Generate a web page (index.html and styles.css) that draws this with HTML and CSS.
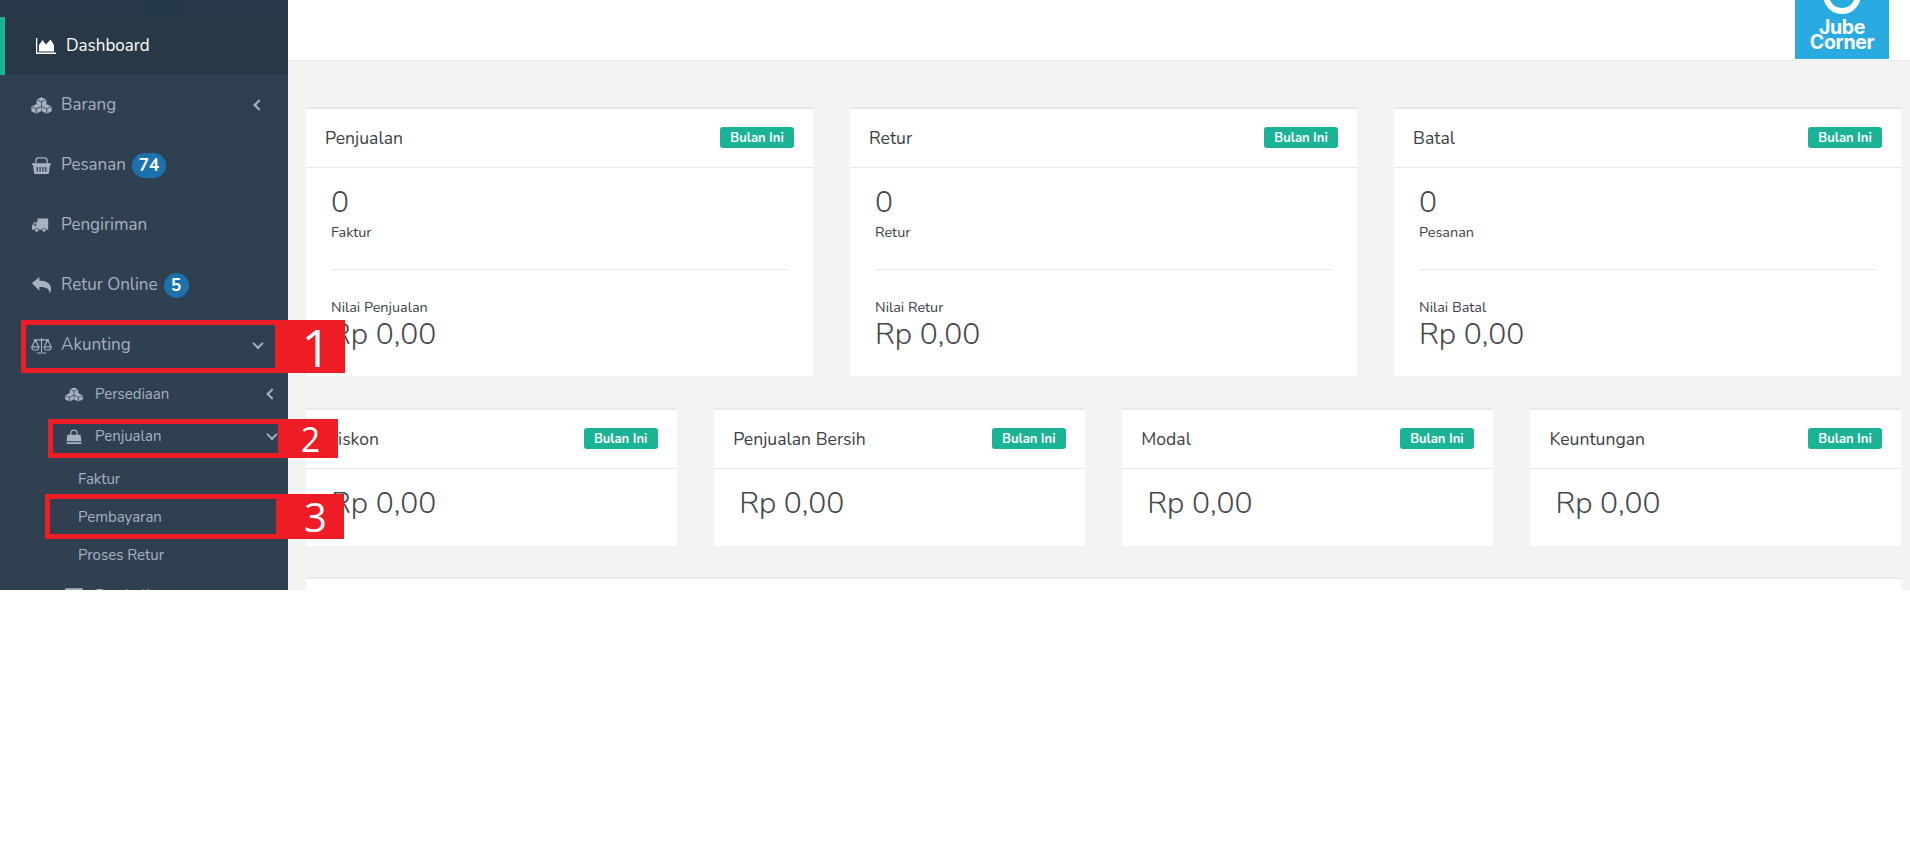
FILE: index.html
```html
<!DOCTYPE html>
<html lang="id">
<head>
<meta charset="utf-8">
<title>Dashboard</title>
<link rel="stylesheet" href="styles.css">
</head>
<body>
<div class="page">
  <aside class="sidebar">
    <div class="strip"></div>
    <nav class="nav">
      <a class="item active"><svg class="ico" viewBox="0 0 20 16"><path d="M0 0h1.300v14.600H20V16H0z"/><path d="M3 13.500V7L6.500 2 10 6.500l4.500-5L18 7v6.500z"/></svg><span>Dashboard</span></a>
      <a class="item"><svg class="ico" viewBox="0 0 22 18"><use href="#cubes"/></svg><span>Barang</span><i class="chev left"></i></a>
      <a class="item"><svg class="ico" viewBox="0 0 20 18"><use href="#basket"/></svg><span>Pesanan</span><b class="pill">74</b></a>
      <a class="item"><svg class="ico" viewBox="-1 -1 21 17"><g transform="scale(.9)"><path fill-rule="evenodd" d="M6 1.500A1 1 0 0 1 7 .5h10a1 1 0 0 1 1 1V13h-2.200a2.600 2.600 0 0 0-5 0H7.800a2.600 2.600 0 0 0-5 0H0V9l2.500-4.400H6zM2 8.500h2.700V6.200H3.300z"/><circle cx="5.300" cy="13.600" r="1.800"/><circle cx="13.300" cy="13.600" r="1.800"/></g></svg><span>Pengiriman</span></a>
      <a class="item"><svg class="ico" viewBox="0 0 18 16"><path d="M0 5.800 7 0v3.500c5 0 11 1.500 11 8 0 2-1 3.500-1.500 4.300.500-3.800-2-6.300-9.500-6.300v3.500z"/></svg><span>Retur Online</span><b class="pill round">5</b></a>
      <a class="item"><svg class="ico" viewBox="0 0 22 18"><g fill="none" stroke="currentColor" stroke-width="1.200"><path d="M11 1v15M6 17h10M3 3h16M4.500 3 1 10M4.500 3 8 10M17.500 3 14 10M17.500 3 21 10"/><path d="M.7 10.500h7.600a3.800 3.300 0 0 1-7.600 0zM13.700 10.500h7.600a3.800 3.300 0 0 1-7.600 0z"/></g></svg><span>Akunting</span><i class="chev down"></i></a>
      <div class="sub">
        <a class="subitem"><svg class="ico small" viewBox="0 0 22 18"><use href="#cubes"/></svg><span>Persediaan</span><i class="chev left"></i></a>
        <a class="subitem"><svg class="ico small" viewBox="0 0 16 16"><path d="M1 6h3V4.500a4 4 0 0 1 8 0V6h3l1 7H0zM5.300 6h5.400V4.500a2.700 2.700 0 0 0-5.400 0zM0 14h16v2H0z"/></svg><span>Penjualan</span><i class="chev down"></i></a>
        <a class="leaf">Faktur</a>
        <a class="leaf">Pembayaran</a>
        <a class="leaf">Proses Retur</a>
        <a class="subitem"><svg class="ico small" viewBox="0 0 20 16"><rect width="20" height="16" rx="1"/></svg><span>Pembelian</span></a>
      </div>
    </nav>
  </aside>
  <main class="main">
    <header class="topbar">
      <div class="logo">
        <span class="ring"></span>
        <span class="logotext">Jube<br>Corner</span>
      </div>
    </header>
    <section class="content">
      <div class="row three">
        <article class="card">
          <div class="head"><h5>Penjualan</h5><span class="tag">Bulan Ini</span></div>
          <div class="body"><p class="num">0</p><small>Faktur</small><hr><small>Nilai Penjualan</small><p class="num tight">Rp 0,00</p></div>
        </article>
        <article class="card">
          <div class="head"><h5>Retur</h5><span class="tag">Bulan Ini</span></div>
          <div class="body"><p class="num">0</p><small>Retur</small><hr><small>Nilai Retur</small><p class="num tight">Rp 0,00</p></div>
        </article>
        <article class="card">
          <div class="head"><h5>Batal</h5><span class="tag">Bulan Ini</span></div>
          <div class="body"><p class="num">0</p><small>Pesanan</small><hr><small>Nilai Batal</small><p class="num tight">Rp 0,00</p></div>
        </article>
      </div>
      <div class="row four">
        <article class="card">
          <div class="head"><h5>Diskon</h5><span class="tag">Bulan Ini</span></div>
          <div class="body short"><p class="num">Rp 0,00</p></div>
        </article>
        <article class="card">
          <div class="head"><h5>Penjualan Bersih</h5><span class="tag">Bulan Ini</span></div>
          <div class="body short"><p class="num">Rp 0,00</p></div>
        </article>
        <article class="card">
          <div class="head"><h5>Modal</h5><span class="tag">Bulan Ini</span></div>
          <div class="body short"><p class="num">Rp 0,00</p></div>
        </article>
        <article class="card">
          <div class="head"><h5>Keuntungan</h5><span class="tag">Bulan Ini</span></div>
          <div class="body short"><p class="num">Rp 0,00</p></div>
        </article>
      </div>
      <div class="card wide"></div>
    </section>
  </main>
  <div class="mark m1"><div class="frame"></div><div class="no">1</div></div>
  <div class="mark m2"><div class="frame"></div><div class="no">2</div></div>
  <div class="mark m3"><div class="frame"></div><div class="no">3</div></div>
</div>
<svg class="defs" width="0" height="0">
  <symbol id="cubes" viewBox="0 0 22 18">
    <path d="M11 .3l5.200 2.300v5.200L11 10.300 5.800 7.800V2.600zM5.500 7.600l5.200 2.400v5.200l-5.200 2.500L.3 15.200V10zM16.500 7.600l5.200 2.400v5.200l-5.200 2.500-5.200-2.500V10z"/>
    <path d="M5.800 2.600 11 5l5.200-2.400M11 5v5.300M.3 10l5.200 2.500 5.200-2.500M5.500 12.500v5M11.300 10l5.200 2.500 5.200-2.500M16.500 12.500v5" fill="none" stroke="#2f4050" stroke-width=".9"/>
  </symbol>
  <symbol id="basket" viewBox="0 0 20 18">
    <path fill-rule="evenodd" d="M0 6.500h20v2h-1l-1.200 8.700a1 1 0 0 1-1 .8H3.200a1 1 0 0 1-1-.8L1 8.500H0zM4.800 10.500v5h1.400v-5zM7.800 10.500v5h1.400v-5zM10.800 10.500v5h1.400v-5zM13.800 10.500v5h1.400v-5z"/>
    <path d="M4 6.500V4a3 3 0 0 1 3-3h6a3 3 0 0 1 3 3v2.500" fill="none" stroke="currentColor" stroke-width="1.300"/>
  </symbol>
</svg>
</body>
</html>
```
FILE: styles.css
```css
* { box-sizing: border-box; }
html, body { margin: 0; background: #fff; }
body { font-family: "Nunito", "Lato", "Noto Sans", sans-serif; color: #3b3f44; }
.defs { position: absolute; }
.page { position: relative; display: flex; height: 590px; overflow: hidden; background: #f3f3f4; }

.sidebar { flex: 0 0 288px; background: #2f4050; color: #a7b1c2; }
.strip { height: 17px; background: linear-gradient(90deg, #283a4a 0, #25374a 60%, #293b4b 68%, #293a4a 100%); }
.nav { display: flex; flex-direction: column; }
.item { display: flex; align-items: center; height: 60px; padding-left: 31px; font-size: 17px; position: relative; }
.item > span { margin-bottom: 2px; }
.item .ico { width: 21px; height: 17px; margin-right: 9px; }
.item.active { height: 58px; background: #293846; color: #fff; border-left: 5px solid #1ab394; }
.item.active .ico { width: 20px; height: 16px; margin-right: 10px; }
.ico { fill: currentColor; flex: none; display: block; }
.chev { position: absolute; width: 8px; height: 8px; border-left: 2.750px solid currentColor; border-bottom: 2.750px solid currentColor; }
.chev.left { right: 25px; transform: rotate(45deg); }
.chev.down { right: 26px; transform: rotate(-45deg) translate(1px, -1px); }
.pill { margin-left: 6px; height: 25px; min-width: 34px; border-radius: 13px; background: #1c72ad; color: #fff; font-size: 17px; font-weight: 700; display: flex; align-items: center; justify-content: center; }
.pill.round { min-width: 25px; }

.sub { display: flex; flex-direction: column; margin-top: -2px; }
.subitem { display: flex; align-items: center; height: 42px; padding-left: 65px; font-size: 15px; position: relative; }
.subitem > span { margin-bottom: 1px; }
.subitem .chev { right: 12px; }
.ico.small { width: 18px; height: 15px; margin-right: 12px; }
.leaf { display: flex; align-items: center; height: 38px; padding-left: 78px; font-size: 15px; }
.subitem + .leaf { margin-top: 3px; }

.main { flex: 1; min-width: 0; display: flex; flex-direction: column; }
.topbar { flex: 0 0 61px; background: #fff; border-bottom: 1px solid #e7eaec; padding-right: 21px; display: flex; justify-content: flex-end; }
.logo { position: relative; width: 94px; height: 59px; background: #29abe2; color: #fff; overflow: hidden; display: flex; align-items: flex-end; justify-content: center; }
.ring { position: absolute; left: 28px; top: -24px; width: 38px; height: 38px; border-radius: 50%; border: 6px solid #fff; }
.logotext { font-family: "Inter", sans-serif; font-weight: 700; font-size: 19.500px; line-height: 15px; text-align: center; margin-bottom: 9px; letter-spacing: -.3px; }

.content { flex: 1; padding: 46px 9px 0 18px; display: flex; flex-direction: column; gap: 32px; }
.row { display: grid; }
.three { grid-template-columns: 507px 507px 1fr; column-gap: 37px; }
.four { grid-template-columns: repeat(4, 1fr); column-gap: 37.500px; }
.card { background: #fff; border-top: 2px solid #e7eaec; }
.wide { flex: 1; margin-top: -1px; }
.head { display: flex; justify-content: space-between; align-items: center; height: 59px; padding: 0 19px 1px 19px; border-bottom: 1px solid #e7eaec; }
h5 { margin: 0; font-size: 17.600px; font-weight: 400; color: #3b3f44; }
.tag { width: 74px; height: 21px; border-radius: 3px; background: #1ab394; color: #fff; font-size: 13px; font-weight: 700; display: flex; align-items: center; justify-content: center; }
.body { padding: 16px 25px 0 25px; height: 208px; }
.body.short { height: 77px; padding-top: 16px; }
.num { margin: 0; font-size: 30px; font-weight: 300; line-height: 38px; color: #44484d; }
.tight { line-height: 36px; }
small { display: block; font-size: 14.400px; line-height: 19px; margin-top: 1px; }
hr { border: 0; border-top: 1px solid #e7eaec; margin: 27px 0 28px; }

.mark { position: absolute; display: flex; }
.frame { border: 5px solid #ee1c25; }
.no { background: #ee1c25; color: #fff; font-family: "Open Sans", sans-serif; display: flex; align-items: center; justify-content: center; }
.m1 { left: 21px; top: 320px; height: 53px; }
.m1 .frame { width: 259px; }
.m1 .no { width: 65px; font-size: 52px; padding-left: 7px; }
.m2 { left: 48px; top: 419px; height: 39px; }
.m2 .frame { width: 235px; }
.m2 .no { width: 55px; font-size: 34px; }
.m3 { left: 45px; top: 494px; height: 45px; }
.m3 .frame { width: 236px; }
.m3 .no { width: 63px; font-size: 40px; padding-left: 6px; }
```
